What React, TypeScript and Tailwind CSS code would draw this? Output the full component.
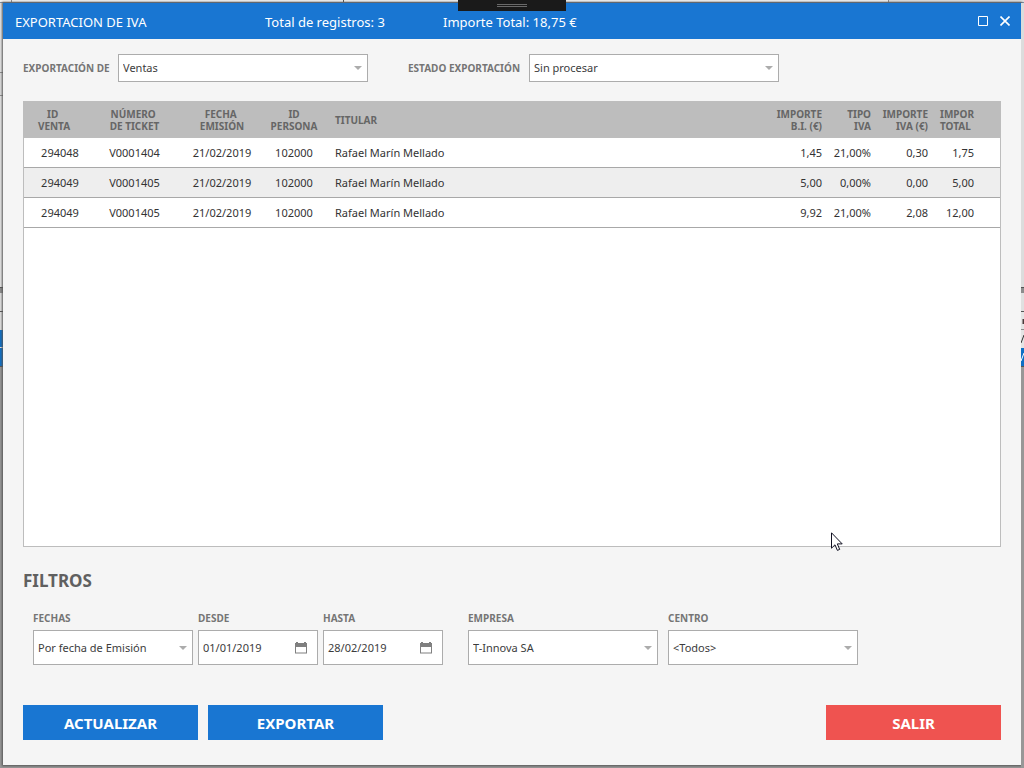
import { useState } from "react";
import type { ReactNode } from "react";
import clsx from "clsx";

const rows = [
  { idVenta: "294048", ticket: "V0001404", fecha: "21/02/2019", idPersona: "102000", titular: "Rafael Marín Mellado", base: "1,45", tipo: "21,00%", iva: "0,30", total: "1,75" },
  { idVenta: "294049", ticket: "V0001405", fecha: "21/02/2019", idPersona: "102000", titular: "Rafael Marín Mellado", base: "5,00", tipo: "0,00%", iva: "0,00", total: "5,00" },
  { idVenta: "294049", ticket: "V0001405", fecha: "21/02/2019", idPersona: "102000", titular: "Rafael Marín Mellado", base: "9,92", tipo: "21,00%", iva: "2,08", total: "12,00" },
];

const labelClass = "text-[10px] leading-4 font-bold text-[#757575] whitespace-nowrap";

function Select({ id, options, className }: { id: string; options: string[]; className?: string }) {
  return (
    <div className={clsx("relative", className)}>
      <select id={id} className="h-full w-full appearance-none rounded-none border border-[#acacac] bg-white pl-1 pr-6 pt-px text-[11px] text-[#3c3c3c] outline-none">
        {options.map((o) => <option key={o}>{o}</option>)}
      </select>
      <svg className="pointer-events-none absolute right-1.5 top-1/2 -mt-0.5 h-1 w-2" viewBox="0 0 8 4">
        <path d="M0 0h8L4 4z" fill="#acacac" />
      </svg>
    </div>
  );
}

function DateField({ id, initial }: { id: string; initial: string }) {
  const [value, setValue] = useState(initial);
  return (
    <div className="flex h-[35px] w-[120px] items-center border border-[#acacac] bg-white pr-2.5">
      <input id={id} value={value} onChange={(e) => setValue(e.target.value)}
        className="min-w-0 flex-1 pl-1 pt-px text-[11px] text-[#3c3c3c] outline-none" />
      <button type="button" aria-label="Abrir calendario">
        <svg className="h-3 w-3" viewBox="0 0 12 12">
          <path d="M0 1h1V0h2v1h6V0h2v1h1v10.5H0zM1 5v5.5h10V5z" fill="#808080" fillRule="evenodd" />
        </svg>
      </button>
    </div>
  );
}

function Field({ id, label, children }: { id: string; label: string; children: ReactNode }) {
  return (
    <div className="flex flex-col gap-1">
      <label htmlFor={id} className={labelClass}>{label}</label>
      {children}
    </div>
  );
}

// Edges of the main application that show around the dialog
function LeftEdge() {
  return (
    <div className="-mb-[3px] flex w-[3px] flex-col bg-[#979797]">
      <div className="h-[69px] bg-[#e4e4e4]" />
      <div className="h-6 border-y border-[#8c8c8c] bg-[#dcdcdc]" />
      <div className="h-[191px] bg-[#e4e4e4]" />
      <div className="h-1.5 border-t border-[#555555] bg-[#8c8c8c]" />
      <div className="h-[37px] bg-[#e0e0e0]">
        <div className="h-[19px] border-b border-[#555555]" />
      </div>
      <div className="h-[37px] border-b border-[#555555] bg-[#0f6fc5]">
        <div className="h-[18px] border-b border-[#e4e4e4]" />
      </div>
    </div>
  );
}

function RightEdge() {
  return (
    <div className="-mb-[3px] flex w-[3px] flex-col bg-[#979797]">
      <div className="h-[284px] bg-[#dcdcdc]" />
      <div className="h-1.5 border-t border-[#555555] bg-[#8c8c8c]" />
      <div className="h-[19px] border-b border-[#555555] bg-[#e0e0e0]" />
      <svg className="h-9 w-[3px] bg-[#e4e4e4]" viewBox="0 0 3 36">
        <path d="M1.5 7h1.5v5H1.5z" fill="#4a3a3a" />
        <path d="M0 17.5h3" stroke="#8c8c8c" />
        <path d="M0 31l3-8" stroke="#333333" />
      </svg>
      <svg className="h-[19px] w-[3px] border-b border-[#555555] bg-[#0f6fc5]" viewBox="0 0 3 18">
        <path d="M0 13l3-8" stroke="#ffffff" />
      </svg>
    </div>
  );
}

export default function App() {
  const th = "h-9 p-0 text-center";
  return (
    <div className="relative flex min-h-screen flex-col bg-[#979797] font-['Noto_Sans','Segoe_UI',sans-serif]">
      <div className="flex h-[3px] border-b border-[#7f8fa3] bg-[#f2f2f2]">
        <div className="w-3 border-r border-[#8c8c8c]" />
        <div className="w-[332px] border-r border-[#555555]" />
        <div className="flex-1" />
        <div className="w-[136px] border-l border-[#8c8c8c] bg-[#e0e0e0]" />
      </div>

      <div className="flex flex-1 pb-[3px]">
        <LeftEdge />
        <main className="flex min-w-0 flex-1 flex-col bg-[#f5f5f5] shadow-[0_0_2px_1px_#555555]">
          <header className="flex h-9 items-center bg-[#1976d2] pl-3 pr-[11px] text-[13px] text-white">
            <h1 className="w-[250px] pt-[3px]">EXPORTACION DE IVA</h1>
            <span className="w-[178px] pt-[3px]">Total de registros: 3</span>
            <span className="flex-1 pt-[3px]">Importe Total: 18,75 €</span>
            <div className="flex items-center gap-3">
              <button type="button" aria-label="Maximizar">
                <svg className="h-2.5 w-2.5" viewBox="0 0 10 10"><path d="M.5.5h9v9h-9z" fill="none" stroke="#ffffff" /></svg>
              </button>
              <button type="button" aria-label="Cerrar">
                <svg className="h-2.5 w-2.5" viewBox="0 0 10 10"><path d="M.5.5l9 9M9.5.5l-9 9" stroke="#ffffff" strokeWidth="1.6" /></svg>
              </button>
            </div>
          </header>

          <div className="flex flex-1 flex-col px-5 pb-[25px] pt-[15px]">
            <div className="flex items-center">
              <label htmlFor="exportacion" className={clsx(labelClass, "w-[95px]")}>EXPORTACIÓN DE</label>
              <Select id="exportacion" options={["Ventas"]} className="h-7 w-[250px]" />
              <label htmlFor="estado" className={clsx(labelClass, "ml-10 w-[121px]")}>ESTADO EXPORTACIÓN</label>
              <Select id="estado" options={["Sin procesar"]} className="h-7 w-[250px]" />
            </div>

            <div className="mt-[19px] flex-1 border border-[#bdbdbd] bg-white">
              <table className="w-full table-fixed border-separate border-spacing-0 text-[11px] text-[#333333]">
                <colgroup>
                  <col className="w-[62px]" />
                  <col className="w-[97px]" />
                  <col className="w-[78px]" />
                  <col className="w-[66px]" />
                  <col />
                  <col className="w-[60px]" />
                  <col className="w-[49px]" />
                  <col className="w-[57px]" />
                  <col className="w-[68px]" />
                </colgroup>
                <thead className="bg-[#bdbdbd] text-[10px] leading-3 text-[#666666]">
                  <tr>
                    <th className={clsx(th, "pr-0.5")}>ID&nbsp;<br />VENTA</th>
                    <th className={th}>NÚMERO&nbsp;<br />DE TICKET</th>
                    <th className={th}>FECHA&nbsp;<br />EMISIÓN</th>
                    <th className={th}>ID<br />PERSONA</th>
                    <th className="py-0 pl-2 pr-0 text-left">TITULAR</th>
                    <th className="py-0 pl-0 pr-1 text-right">IMPORTE<br />B.I. (€)</th>
                    <th className="py-0 pl-0 pr-1 text-right">TIPO<br />IVA</th>
                    <th className="py-0 pl-0 pr-1 text-right">IMPORTE<br />IVA (€)</th>
                    <th className="py-0 pl-2 pr-0 text-left">IMPOR<br />TOTAL</th>
                  </tr>
                </thead>
                <tbody>
                  {rows.map((r, i) => (
                    <tr key={i} className="h-[30px] even:bg-[#eeeeee] [&>td]:border-b [&>td]:border-[#a8a8a8] [&>td]:pt-0.5">
                      <td className="pl-2.5 text-center">{r.idVenta}</td>
                      <td className="text-center">{r.ticket}</td>
                      <td className="text-center">{r.fecha}</td>
                      <td className="text-center">{r.idPersona}</td>
                      <td className="pl-2">{r.titular}</td>
                      <td className="pr-1 text-right">{r.base}</td>
                      <td className="pr-1 text-right">{r.tipo}</td>
                      <td className="pr-1 text-right">{r.iva}</td>
                      <td className="pr-[26px] text-right">{r.total}</td>
                    </tr>
                  ))}
                </tbody>
              </table>
            </div>

            <h2 className="mt-[22px] text-[17px] leading-6 font-bold text-[#606060]">FILTROS</h2>

            <div className="mt-[17px] flex pl-2.5">
              <div className="flex gap-[5px]">
                <Field id="fechas" label="FECHAS">
                  <Select id="fechas" options={["Por fecha de Emisión"]} className="h-[35px] w-40" />
                </Field>
                <Field id="desde" label="DESDE"><DateField id="desde" initial="01/01/2019" /></Field>
                <Field id="hasta" label="HASTA"><DateField id="hasta" initial="28/02/2019" /></Field>
              </div>
              <div className="ml-[25px] flex gap-2.5">
                <Field id="empresa" label="EMPRESA">
                  <Select id="empresa" options={["T-Innova SA"]} className="h-[35px] w-[190px]" />
                </Field>
                <Field id="centro" label="CENTRO">
                  <Select id="centro" options={["<Todos>"]} className="h-[35px] w-[190px]" />
                </Field>
              </div>
            </div>

            <div className="mt-10 flex gap-2.5 text-[15px] font-bold text-white">
              <button type="button" className="h-[35px] w-[175px] bg-[#1976d2] pt-px">ACTUALIZAR</button>
              <button type="button" className="h-[35px] w-[175px] bg-[#1976d2] pt-px">EXPORTAR</button>
              <button type="button" className="ml-auto h-[35px] w-[175px] bg-[#ef5350] pt-px">SALIR</button>
            </div>
          </div>
        </main>
        <RightEdge />
      </div>

      {/* Docked toolbar handle */}
      <div className="absolute left-1/2 top-0 -ml-[54px] flex h-[11px] w-[108px] flex-col items-center gap-px bg-[#1a1a1a] pt-1">
        <div className="h-px w-[30px] bg-[#6a6a6a]" />
        <div className="h-px w-[30px] bg-[#6a6a6a]" />
      </div>

      {/* Mouse pointer */}
      <svg className="pointer-events-none absolute left-[831px] top-[532px] h-[19px] w-3" viewBox="0 0 12 19">
        <path d="M.5.8v15.4l3.5-3.4 2.4 5.6 2.3-1-2.4-5.5h4.9z" fill="#ffffff" stroke="#111122" />
      </svg>
    </div>
  );
}
